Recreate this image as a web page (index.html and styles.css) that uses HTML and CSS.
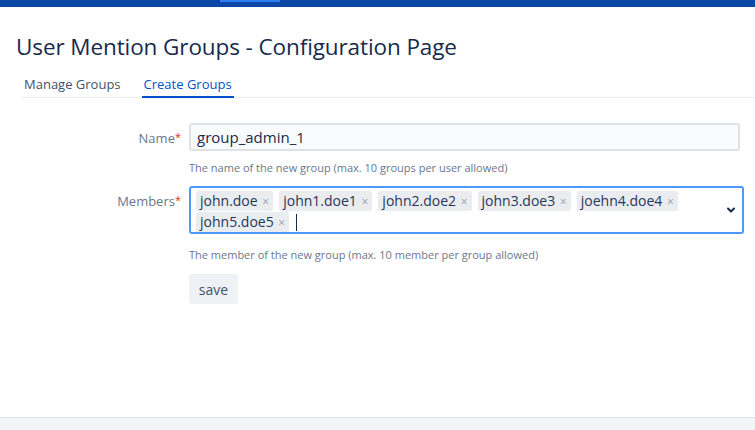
FILE: index.html
```html
<!DOCTYPE html>
<html>
<head>
<meta charset="utf-8">
<link rel="stylesheet" href="styles.css">
</head>
<body>
<header class="topbar"><span class="topbar-active"></span></header>
<main class="page">
  <h1 class="title">User Mention Groups - Configuration Page</h1>
  <nav class="tabs">
    <a class="tab">Manage Groups</a>
    <a class="tab tab-active">Create Groups</a>
  </nav>
  <form class="form">
    <div class="row">
      <label class="label">Name<span class="req">*</span></label>
      <div class="field">
        <div class="input">group_admin_1</div>
        <div class="help">The name of the new group (max. 10 groups per user allowed)</div>
      </div>
    </div>
    <div class="row">
      <label class="label">Members<span class="req">*</span></label>
      <div class="field">
        <div class="select">
          <div class="tags">
            <span class="tag">john.doe <span class="x">×</span></span>
            <span class="tag">john1.doe1 <span class="x">×</span></span>
            <span class="tag">john2.doe2 <span class="x">×</span></span>
            <span class="tag">john3.doe3 <span class="x">×</span></span>
            <span class="tag">joehn4.doe4 <span class="x">×</span></span>
            <span class="tag">john5.doe5 <span class="x">×</span></span>
            <span class="caret"></span>
          </div>
          <svg class="chev" width="10" height="8" viewBox="0 0 10 8"><path d="M2 2.5 L5 5.5 L8 2.5" fill="none" stroke="#172b4d" stroke-width="2" stroke-linecap="round" stroke-linejoin="round"/></svg>
        </div>
        <div class="help help-members">The member of the new group (max. 10 member per group allowed)</div>
        <button type="button" class="btn">save</button>
      </div>
    </div>
  </form>
</main>
<footer class="footer"></footer>
</body>
</html>
```
FILE: styles.css
```css
* { box-sizing: border-box; }
html, body { margin: 0; padding: 0; height: 100%; }
body {
  font-family: "Open Sans", "Noto Sans", sans-serif;
  color: #172b4d;
  background: #fff;
  display: flex;
  flex-direction: column;
  height: 430px;
  overflow: hidden;
}
.topbar {
  height: 7px;
  background: #0a47a6;
  flex: none;
  position: relative;
}
.topbar-active {
  position: absolute;
  left: 220px;
  top: 0;
  width: 60px;
  height: 2px;
  background: #2f7df0;
}
.page {
  flex: 1;
  padding: 25px 0 0 16px;
}
.title {
  margin: 0;
  font-weight: 400;
  font-size: 22.5px;
  line-height: 30px;
  letter-spacing: -0.1px;
}
.tabs {
  display: flex;
  gap: 19px;
  margin: 14px 0 0 6px;
  border-bottom: 1px solid #ebecf0;
  height: 22px;
}
.tab {
  font-size: 13px;
  color: #42526e;
  padding: 0 2px;
  height: 22px;
  line-height: 16px;
}
.tab-active {
  color: #0052cc;
  border-bottom: 2px solid #0052cc;
}
.form {
  margin-top: 25px;
  display: flex;
  flex-direction: column;
  gap: 11px;
}
.row {
  display: flex;
}
.label {
  width: 173px;
  text-align: right;
  font-size: 13px;
  color: #6b778c;
  padding-top: 6px;
  padding-right: 8px;
}
.req { color: #de350b; font-size: 11px; vertical-align: 2px; }
.field {
  width: 555px;
}
.input {
  height: 28px;
  width: 551px;
  background: #fafbfc;
  border: 2px solid #dfe1e6;
  border-radius: 3px;
  font-size: 15px;
  padding: 1px 6px;
  line-height: 22px;
}
.help {
  font-size: 11px;
  color: #6b778c;
  margin-top: 9px;
  line-height: 15px;
}
.help-members { margin-top: 13px; }
.select {
  margin-top: 0;
  width: 555px;
  height: 48px;
  border: 2px solid #4c9aff;
  border-radius: 3px;
  background: #fff;
  display: flex;
  align-items: center;
  padding: 3px 6px 3px 5px;
}
.tags {
  flex: 1;
  display: flex;
  flex-wrap: wrap;
  gap: 1px 6px;
  align-content: flex-start;
  align-self: flex-start;
}
.tag {
  background: #ebecf0;
  border-radius: 2px;
  font-size: 14px;
  line-height: 19px;
  padding: 0 4px;
  color: #253858;
}
.x { color: #97a0af; font-size: 12px; margin-left: 1px; }
.caret {
  width: 1px;
  height: 17px;
  background: #172b4d;
  margin-left: 1px;
  align-self: center;
}
.chev { flex: none; margin-top: -1px; }
.btn {
  margin-top: 12px;
  height: 30px;
  width: 49px;
  border: none;
  border-radius: 3px;
  background: #f0f1f4;
  color: #42526e;
  font-family: inherit;
  font-size: 14px;
  padding: 0;
}
.footer {
  flex: none;
  height: 13px;
  background: #f4f5f7;
  border-top: 1px solid #dfe1e6;
}
```
